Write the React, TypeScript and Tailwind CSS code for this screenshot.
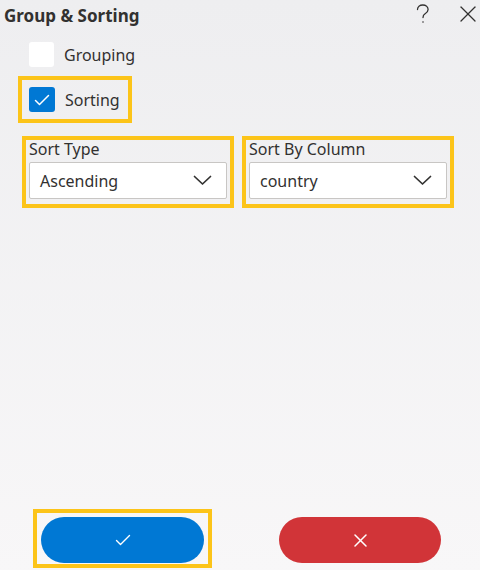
import React from "react";

function Chevron() {
  return (
    <svg width="19" height="11" viewBox="0 0 19 11" fill="none" stroke="#323130" strokeWidth="1.7" strokeLinecap="round" strokeLinejoin="round">
      <polyline points="1.5 1.5 9.5 9 17.5 1.5" />
    </svg>
  );
}

function SelectField({ label, value, width }: { label: string; value: string; width: string }) {
  return (
    <div className={`border-4 border-[#fcc419] px-[3px] pb-[5px] ${width}`}>
      <div className="mb-[4px] h-[18px] text-[16px] leading-[18px] text-[#323130]">{label}</div>
      <div className="flex h-[37px] items-center justify-between rounded-[2px] border border-[#c8c6c4] bg-white pl-[10px] pr-[14px]">
        <span className="text-[16px] text-[#323130]">{value}</span>
        <Chevron />
      </div>
    </div>
  );
}

export default function App() {
  return (
    <div
      className="flex h-[570px] w-[480px] flex-col bg-gradient-to-b from-[#eeeef0] to-[#f8f7f8] text-[#323130]"
      style={{ fontFamily: '"Noto Sans", "Open Sans", sans-serif' }}
    >
      {/* header */}
      <div className="flex h-[34px] items-start justify-between pl-[4px] pr-[4px] pt-[4px]">
        <div className="text-[17px] font-bold leading-[24px]">Group &amp; Sorting</div>
        <div className="flex items-start gap-[30px]">
          <svg width="14" height="20" viewBox="0 0 14 20" fill="none" stroke="#323130" strokeWidth="1.3" strokeLinecap="round">
            <path d="M1.5 5.5C1.5 3 3.8 1 6.8 1s5.3 2 5.3 4.5c0 2.2-1.4 3.2-3 4.2S7 11.5 7 13.5" />
            <circle cx="7" cy="18" r="0.8" fill="#323130" stroke="none" />
          </svg>
          <svg width="16" height="16" viewBox="0 0 16 16" fill="none" stroke="#323130" strokeWidth="1.3" strokeLinecap="round" className="mt-[2px]">
            <line x1="1" y1="1" x2="15" y2="15" />
            <line x1="15" y1="1" x2="1" y2="15" />
          </svg>
        </div>
      </div>

      {/* grouping */}
      <div className="mt-[8px] flex items-center pl-[29px]">
        <div className="h-[25px] w-[25px] rounded-[3px] bg-white" />
        <span className="ml-[10px] text-[16px]">Grouping</span>
      </div>

      {/* sorting */}
      <div className="ml-[18px] mt-[9px] flex h-[47px] w-[114px] items-center border-4 border-[#fcc419] pl-[7px]">
        <div className="flex h-[25px] w-[26px] items-center justify-center rounded-[3px] bg-[#0078d4]">
          <svg width="16" height="12" viewBox="0 0 16 12" fill="none" stroke="white" strokeWidth="1.5" strokeLinecap="round" strokeLinejoin="round">
            <polyline points="1.5 6.5 5.5 10.5 14.5 1.5" />
          </svg>
        </div>
        <span className="ml-[10px] text-[16px]">Sorting</span>
      </div>

      {/* selects */}
      <div className="ml-[22px] mt-[13px] flex gap-[8px]">
        <SelectField label="Sort Type" value="Ascending" width="w-[212px]" />
        <SelectField label="Sort By Column" value="country" width="w-[212px]" />
      </div>

      <div className="flex-1" />

      {/* buttons */}
      <div className="mb-[2px] flex items-start">
        <div className="ml-[33px] border-4 border-[#fcc419] px-[4px] pb-[1px] pt-[4px]">
          <button className="flex h-[46px] w-[163px] items-center justify-center rounded-full bg-[#0078d4]">
            <svg width="16" height="12" viewBox="0 0 16 12" fill="none" stroke="white" strokeWidth="1.4" strokeLinecap="round" strokeLinejoin="round">
              <polyline points="1.5 6.5 5.5 10.5 14.5 1.5" />
            </svg>
          </button>
        </div>
        <button className="ml-[67px] mt-[8px] flex h-[46px] w-[162px] items-center justify-center rounded-full bg-[#d13438]">
          <svg width="13" height="13" viewBox="0 0 13 13" fill="none" stroke="white" strokeWidth="1.5" strokeLinecap="round">
            <line x1="1" y1="1" x2="12" y2="12" />
            <line x1="12" y1="1" x2="1" y2="12" />
          </svg>
        </button>
      </div>
    </div>
  );
}
